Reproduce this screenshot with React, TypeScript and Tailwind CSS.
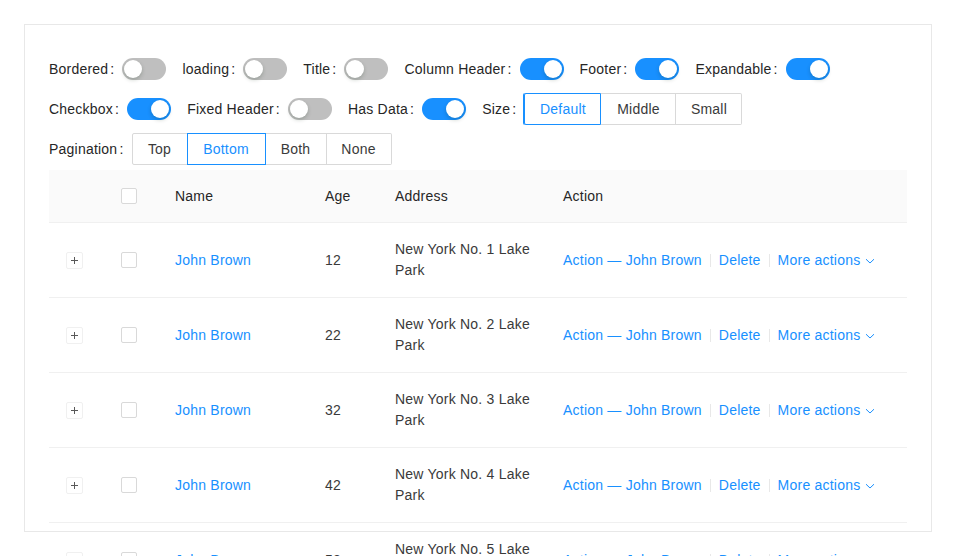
import React from "react";

const FONT = { fontFamily: '"Liberation Sans", Arial, sans-serif' };

function Switch({ on }: { on: boolean }) {
  return (
    <span
      className={
        "relative inline-flex h-[22px] w-[44px] shrink-0 rounded-full " +
        (on ? "bg-[#1890ff]" : "bg-[#bfbfbf]")
      }
    >
      <span
        className={
          "absolute top-[2px] h-[18px] w-[18px] rounded-full bg-white shadow-[0_2px_4px_rgba(0,35,11,0.2)] " +
          (on ? "left-[24px]" : "left-[2px]")
        }
      />
    </span>
  );
}

function Label({ text }: { text: string }) {
  return (
    <span className="flex items-center text-[14px] text-[#262626] whitespace-nowrap">
      {text}
      <span className="ml-[2px] mr-[8px]">:</span>
    </span>
  );
}

function SwitchItem({ label, on }: { label: string; on: boolean }) {
  return (
    <div className="flex h-[32px] items-center mr-[16px]">
      <Label text={label} />
      <Switch on={on} />
    </div>
  );
}

function RadioGroup({
  items,
  selected,
}: {
  items: { t: string; w: string }[];
  selected: string;
}) {
  return (
    <div className="flex h-[32px]">
      {items.map((it, i) => {
        const sel = it.t === selected;
        return (
          <span
            key={it.t}
            className={
              "relative flex h-[32px] items-center justify-center border-y border-r text-[14px] " +
              it.w +
              " " +
              (i === 0 ? "border-l rounded-l-[2px] " : "") +
              (i === items.length - 1 ? "rounded-r-[2px] " : "") +
              (sel
                ? "border-[#1890ff] text-[#1890ff] z-10 shadow-[-1px_0_0_0_#1890ff]"
                : "border-[#d9d9d9] text-[#3a3a3a]")
            }
          >
            {it.t}
          </span>
        );
      })}
    </div>
  );
}

function Checkbox() {
  return <span className="block h-[16px] w-[16px] rounded-[2px] border border-[#d9d9d9] bg-white" />;
}

function ExpandIcon() {
  return (
    <span className="relative block h-[17px] w-[17px] rounded-[2px] border border-[#f0f0f0] bg-white">
      <span className="absolute left-[4px] top-[7px] h-[1px] w-[7px] bg-[#595959]" />
      <span className="absolute left-[7px] top-[4px] h-[7px] w-[1px] bg-[#595959]" />
    </span>
  );
}

function Divider() {
  return <span className="mx-[8px] inline-block h-[13px] w-[1px] bg-[#e8e8e8]" />;
}

const rows = [1, 2, 3, 4, 5];

export default function App() {
  return (
    <div className="bg-white p-[24px] tracking-[0.22px]" style={FONT}>
      <div className="h-[508px] border border-[#e8e8e8] px-[24px] pt-[28px]">
        <div className="flex flex-col gap-[8px]">
          <div className="flex">
            <SwitchItem label="Bordered" on={false} />
            <SwitchItem label="loading" on={false} />
            <SwitchItem label="Title" on={false} />
            <SwitchItem label="Column Header" on={true} />
            <SwitchItem label="Footer" on={true} />
            <SwitchItem label="Expandable" on={true} />
          </div>
          <div className="flex">
            <SwitchItem label="Checkbox" on={true} />
            <SwitchItem label="Fixed Header" on={false} />
            <SwitchItem label="Has Data" on={true} />
            <div className="flex h-[32px] items-center">
              <Label text="Size" />
              <RadioGroup
                selected="Default"
                items={[
                  { t: "Default", w: "w-[77px]" },
                  { t: "Middle", w: "w-[75px]" },
                  { t: "Small", w: "w-[66px]" },
                ]}
              />
            </div>
          </div>
          <div className="flex">
            <div className="flex h-[32px] items-center">
              <Label text="Pagination" />
              <RadioGroup
                selected="Bottom"
                items={[
                  { t: "Top", w: "w-[56px]" },
                  { t: "Bottom", w: "w-[78px]" },
                  { t: "Both", w: "w-[61px]" },
                  { t: "None", w: "w-[65px]" },
                ]}
              />
            </div>
          </div>
        </div>

        <div className="mt-[5px] text-[14px]">
          <div className="flex h-[53px] items-center border-b border-[#f0f0f0] bg-[#fafafa] text-[#262626] font-medium">
            <div className="w-[50px]" />
            <div className="flex w-[60px] justify-center">
              <Checkbox />
            </div>
            <div className="w-[150px] pl-[16px]">Name</div>
            <div className="w-[70px] pl-[16px]">Age</div>
            <div className="w-[168px] pl-[16px]">Address</div>
            <div className="flex-1 pl-[16px]">Action</div>
          </div>
          {rows.map((n) => (
            <div
              key={n}
              className="flex h-[75px] items-center border-b border-[#f0f0f0] text-[#3a3a3a]"
            >
              <div className="flex w-[50px] justify-center">
                <ExpandIcon />
              </div>
              <div className="flex w-[60px] justify-center">
                <Checkbox />
              </div>
              <div className="w-[150px] pl-[16px] text-[#1890ff]">John Brown</div>
              <div className="w-[70px] pl-[16px]">{n * 10 + 2}</div>
              <div className="w-[168px] pl-[16px] leading-[21px]">
                <div>New York No. {n} Lake</div>
                <div>Park</div>
              </div>
              <div className="flex flex-1 items-center pl-[16px] text-[#1890ff] whitespace-nowrap">
                <span>Action — John Brown</span>
                <Divider />
                <span>Delete</span>
                <Divider />
                <span>More actions</span>
                <svg
                  className="ml-[5px] mt-[1px]"
                  width="10"
                  height="10"
                  viewBox="0 0 10 10"
                  fill="none"
                  stroke="#1890ff"
                  strokeWidth="1"
                >
                  <path d="M1 3.2 L5 7 L9 3.2" />
                </svg>
              </div>
            </div>
          ))}
        </div>
      </div>
    </div>
  );
}
